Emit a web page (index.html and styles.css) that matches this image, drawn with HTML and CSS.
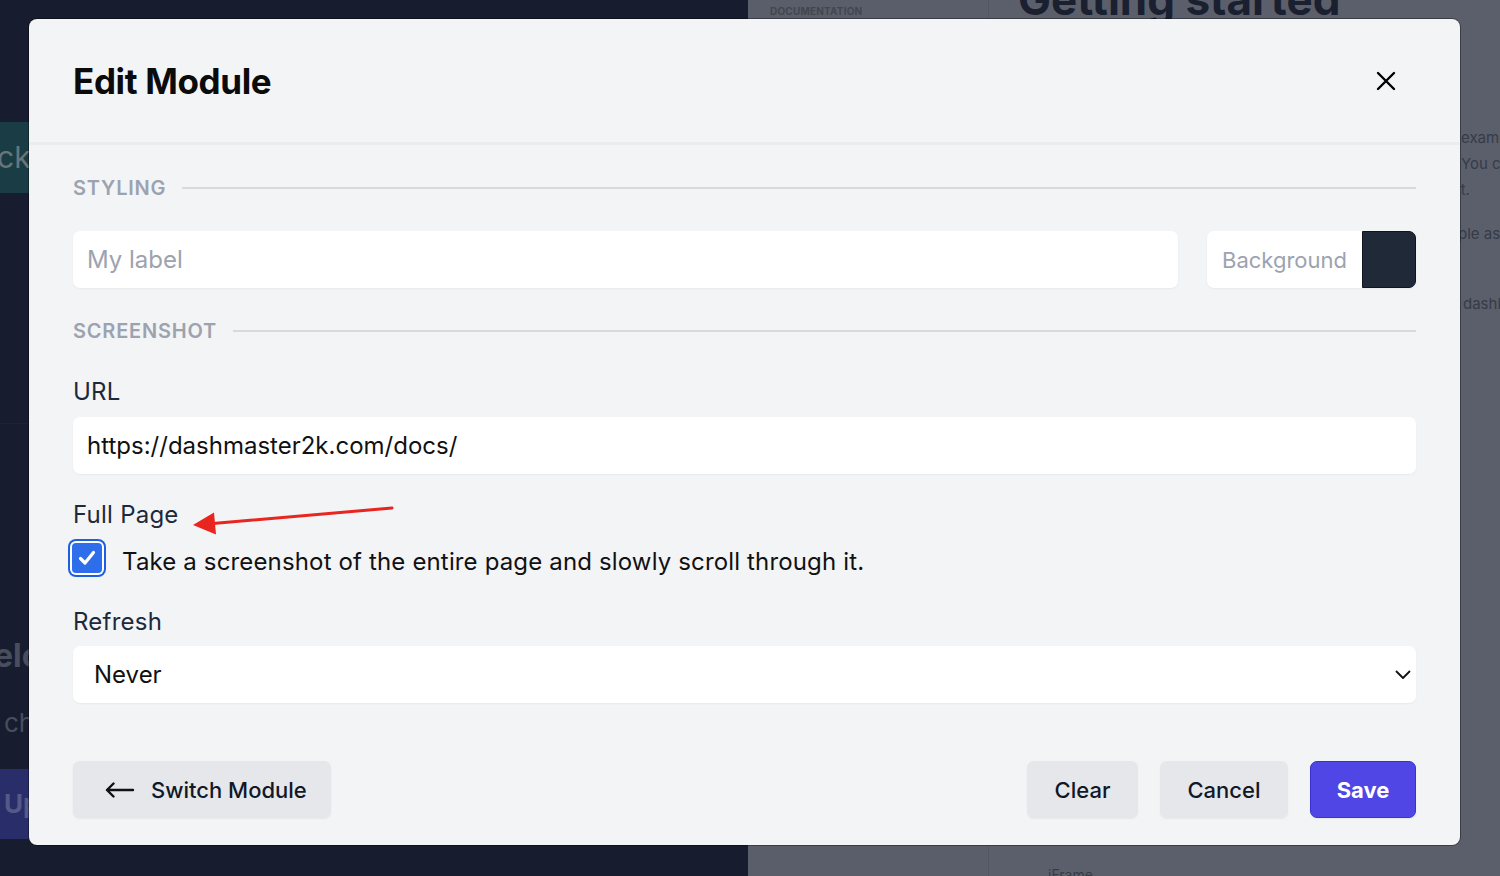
FILE: index.html
```html
<!DOCTYPE html>
<html lang="en">
<head>
    <meta charset="UTF-8">
    <meta name="viewport" content="width=device-width, initial-scale=1.0">
    <title>Edit Module</title>
    <link rel="stylesheet" href="styles.css">
</head>
<body>
    <div class="app-side">
        <div class="side-card">ck</div>
        <div class="side-divider"></div>
        <div class="side-title">elc</div>
        <div class="side-text">ch</div>
        <div class="side-button">Up</div>
    </div>

    <div class="docs">
        <div class="docs-nav">
            <div class="docs-label">DOCUMENTATION</div>
        </div>
        <div class="docs-main">
            <h1 class="docs-title">Getting started</h1>
            <div class="docs-tail">
                <p class="tail-1">example</p>
                <p class="tail-2">You can</p>
                <p class="tail-3">it.</p>
                <p class="tail-4">ple as</p>
                <p class="tail-5">dashboard</p>
            </div>
            <div class="docs-iframe">iFrame</div>
        </div>
    </div>

    <div class="modal">
        <div class="modal-header">
            <h2>Edit Module</h2>
            <button class="close-btn" type="button" aria-label="Close">
                <svg width="20" height="20" viewBox="0 0 20 20" fill="none" stroke="#000" stroke-width="2.4" stroke-linecap="round">
                    <path d="M2 2 L18 18 M18 2 L2 18"/>
                </svg>
            </button>
        </div>

        <div class="modal-body">
            <div class="section-title"><span>STYLING</span><div class="section-line"></div></div>

            <div class="styling-row">
                <input class="field label-field" type="text" placeholder="My label">
                <div class="color-field">
                    <input class="color-text" type="text" placeholder="Background">
                    <div class="color-swatch"></div>
                </div>
            </div>

            <div class="section-title second"><span>SCREENSHOT</span><div class="section-line"></div></div>

            <label class="form-label url-label" for="url">URL</label>
            <input class="field url-field" id="url" type="text" value="https://dashmaster2k.com/docs/">

            <div class="form-label full-label">Full Page</div>
            <label class="check-row">
                <span class="check-box">
                    <svg width="20" height="20" viewBox="0 0 20 20" fill="none" stroke="#fff" stroke-width="3.2" stroke-linecap="round" stroke-linejoin="round">
                        <path d="M3.5 10.5 L8 15 L16.5 4.5"/>
                    </svg>
                </span>
                <span class="check-text">Take a screenshot of the entire page and slowly scroll through it.</span>
            </label>

            <label class="form-label refresh-label" for="refresh">Refresh</label>
            <div class="select-field" id="refresh">
                <span>Never</span>
                <svg width="16" height="10" viewBox="0 0 16 10" fill="none" stroke="#111" stroke-width="1.8" stroke-linecap="round" stroke-linejoin="round">
                    <path d="M1.5 1.5 L8 8 L14.5 1.5"/>
                </svg>
            </div>

            <div class="modal-footer">
                <button class="btn switch-btn" type="button">
                    <svg width="30" height="16" viewBox="0 0 30 16" fill="none" stroke="#111" stroke-width="2.4" stroke-linecap="round" stroke-linejoin="round">
                        <path d="M28 8 H2 M8.5 1.5 L2 8 L8.5 14.5"/>
                    </svg>
                    Switch Module
                </button>
                <div class="footer-right">
                    <button class="btn btn-clear" type="button">Clear</button>
                    <button class="btn btn-cancel" type="button">Cancel</button>
                    <button class="btn btn-primary" type="button">Save</button>
                </div>
            </div>
        </div>

        <!-- annotation arrow -->
        <svg class="note-arrow" width="240" height="44" viewBox="0 0 240 44">
            <path d="M203 9 L24 24.6" stroke="#e8251e" stroke-width="3" stroke-linecap="round"/>
            <path d="M4 26 L27 35.5 L25 13.5 Z" fill="#e8251e"/>
        </svg>
    </div>
</body>
</html>
```

FILE: styles.css
```css
body {
    margin: 0;
    padding: 0;
    display: flex;
    width: 1500px;
    height: 876px;
    overflow: hidden;
    font-family: Inter, "Noto Sans", sans-serif;
    background-color: #171d2e;
}

/* background app */
.app-side {
    width: 748px;
    flex-shrink: 0;
    background-color: #171d2e;
    display: flex;
    flex-direction: column;
    overflow: hidden;
}

.side-card {
    margin-top: 122px;
    height: 71px;
    line-height: 71px;
    background-color: #1a3c44;
    color: #66767c;
    font-size: 30px;
    margin-left: -3px;
}

.side-divider {
    height: 230px;
    border-bottom: 1px solid #1d2435;
}

.side-title {
    margin-top: 212px;
    font-size: 32px;
    font-weight: 700;
    color: #484e5d;
    margin-left: -6px;
    line-height: 40px;
}

.side-text {
    margin-top: 32px;
    font-size: 26px;
    color: #484e5d;
    margin-left: 4px;
    line-height: 30px;
}

.side-button {
    margin-top: 31px;
    height: 70px;
    line-height: 70px;
    background-color: #292d69;
    color: #555985;
    font-size: 26px;
    font-weight: 700;
    padding-left: 4px;
}

.docs {
    flex: 1;
    display: flex;
    background-color: #5b5f6b;
}

.docs-nav {
    width: 240px;
    background-color: #5a5e6a;
    border-right: 1px solid #535763;
}

.docs-label {
    margin: 5px 0 0 22px;
    font-size: 10px;
    font-weight: 700;
    color: #41464f;
    letter-spacing: 0.02em;
}

.docs-main {
    flex: 1;
    position: relative;
    overflow: hidden;
}

.docs-title {
    margin: -28px 0 0 29px;
    font-size: 44px;
    font-weight: 700;
    color: #1a2030;
    white-space: nowrap;
}

.docs-tail {
    padding-left: 472px;
    margin-top: 99px;
    font-size: 15px;
    color: #363b47;
    white-space: nowrap;
}

.docs-tail p {
    margin: 0;
    line-height: 26px;
}

.docs-tail .tail-3 {
    margin-left: -4px;
}

.docs-tail .tail-4 {
    margin-top: 18px;
    margin-left: -3px;
}

.docs-tail .tail-5 {
    margin-top: 44px;
    margin-left: 2px;
}

.docs-iframe {
    position: absolute;
    left: 59px;
    top: 866px;
    font-size: 14px;
    color: #363b47;
}

/* modal */
.modal {
    position: absolute;
    left: 29px;
    top: 19px;
    width: 1431px;
    background-color: #f3f4f6;
    border-radius: 8px;
    box-shadow: 0 0 0 1px rgba(0, 0, 0, 0.35);
}

.modal-header {
    height: 126px;
    box-sizing: border-box;
    border-bottom: 3px solid #ebecef;
    display: flex;
    align-items: center;
    justify-content: space-between;
    padding: 0 64px 0 44px;
}

.modal-header h2 {
    margin: 0;
    font-size: 35px;
    font-weight: 700;
    color: #0b0b0b;
    letter-spacing: -0.01em;
}

.close-btn {
    background: none;
    border: none;
    padding: 0;
    width: 20px;
    height: 20px;
    cursor: pointer;
}

.modal-body {
    padding: 31px 44px 27px 44px;
    display: flex;
    flex-direction: column;
}

.section-title {
    display: flex;
    align-items: center;
    gap: 16px;
    height: 24px;
    font-size: 20px;
    font-weight: 600;
    letter-spacing: 0.04em;
    color: #9ca3af;
}

.section-title.second {
    margin-top: 31px;
}

.section-line {
    flex: 1;
    height: 2px;
    background-color: #d6d9de;
}

.field {
    height: 57px;
    box-sizing: border-box;
    border: none;
    border-radius: 7px;
    background-color: #fff;
    box-shadow: 0 1px 2px rgba(0, 0, 0, 0.05);
    padding: 0 14px;
    font-family: inherit;
    font-size: 24px;
    color: #111;
    outline: none;
}

.field::placeholder,
.color-text::placeholder {
    color: #9ca3af;
}

.styling-row {
    margin-top: 31px;
    display: flex;
    gap: 29px;
}

.label-field {
    flex: 1;
}

.color-field {
    width: 209px;
    height: 57px;
    display: flex;
    background-color: #fff;
    border-radius: 7px;
    box-shadow: 0 1px 2px rgba(0, 0, 0, 0.05);
}

.color-text {
    width: 155px;
    box-sizing: border-box;
    border: none;
    background: none;
    padding: 0 0 0 15px;
    font-family: inherit;
    font-size: 22px;
    outline: none;
}

.color-swatch {
    flex: 1;
    background-color: #1f2937;
    border: 1px solid #0f1520;
    border-radius: 0 7px 7px 0;
}

.form-label {
    display: block;
    font-size: 24px;
    line-height: 32px;
    color: #1e293b;
    letter-spacing: 0.01em;
}

.url-label {
    margin-top: 33px;
}

.url-field {
    margin-top: 9px;
    width: 100%;
}

.full-label {
    margin-top: 25px;
}

.check-row {
    margin-top: 8px;
    display: flex;
    align-items: center;
    gap: 16px;
    height: 38px;
    margin-left: -5px;
}

.check-box {
    width: 30px;
    height: 30px;
    margin: 4px;
    border-radius: 4px;
    background-color: #2f6eea;
    box-shadow: 0 0 0 2px #fff, 0 0 0 4px #1d5fe0;
    display: flex;
    align-items: center;
    justify-content: center;
}

.check-text {
    font-size: 24px;
    color: #111;
    padding-top: 6px;
    letter-spacing: 0.15px;
}

.refresh-label {
    margin-top: 29px;
}

.select-field {
    margin-top: 8px;
    height: 57px;
    box-sizing: border-box;
    background-color: #fff;
    border-radius: 7px;
    box-shadow: 0 1px 2px rgba(0, 0, 0, 0.05);
    display: flex;
    align-items: center;
    justify-content: space-between;
    padding: 0 5px 0 21px;
    font-size: 24px;
    color: #111;
}

.modal-footer {
    margin-top: 58px;
    display: flex;
    justify-content: space-between;
}

.footer-right {
    display: flex;
    gap: 22px;
}

.btn {
    height: 57px;
    padding: 0;
    border: none;
    border-radius: 7px;
    background-color: #e5e7eb;
    box-shadow: 0 1px 2px rgba(0, 0, 0, 0.06);
    font-family: inherit;
    font-size: 22px;
    font-weight: 500;
    color: #111827;
    cursor: pointer;
    display: flex;
    align-items: center;
    justify-content: center;
}

.switch-btn {
    width: 258px;
    padding: 0 0 0 32px;
    gap: 16px;
    justify-content: flex-start;
}

.btn-clear {
    width: 111px;
}

.btn-cancel {
    width: 128px;
}

.btn-primary {
    width: 106px;
    background-color: #4f46e5;
    border: 1px solid #3b32d6;
    color: #fff;
    font-weight: 700;
}

.note-arrow {
    position: absolute;
    left: 160px;
    top: 480px;
}
```
